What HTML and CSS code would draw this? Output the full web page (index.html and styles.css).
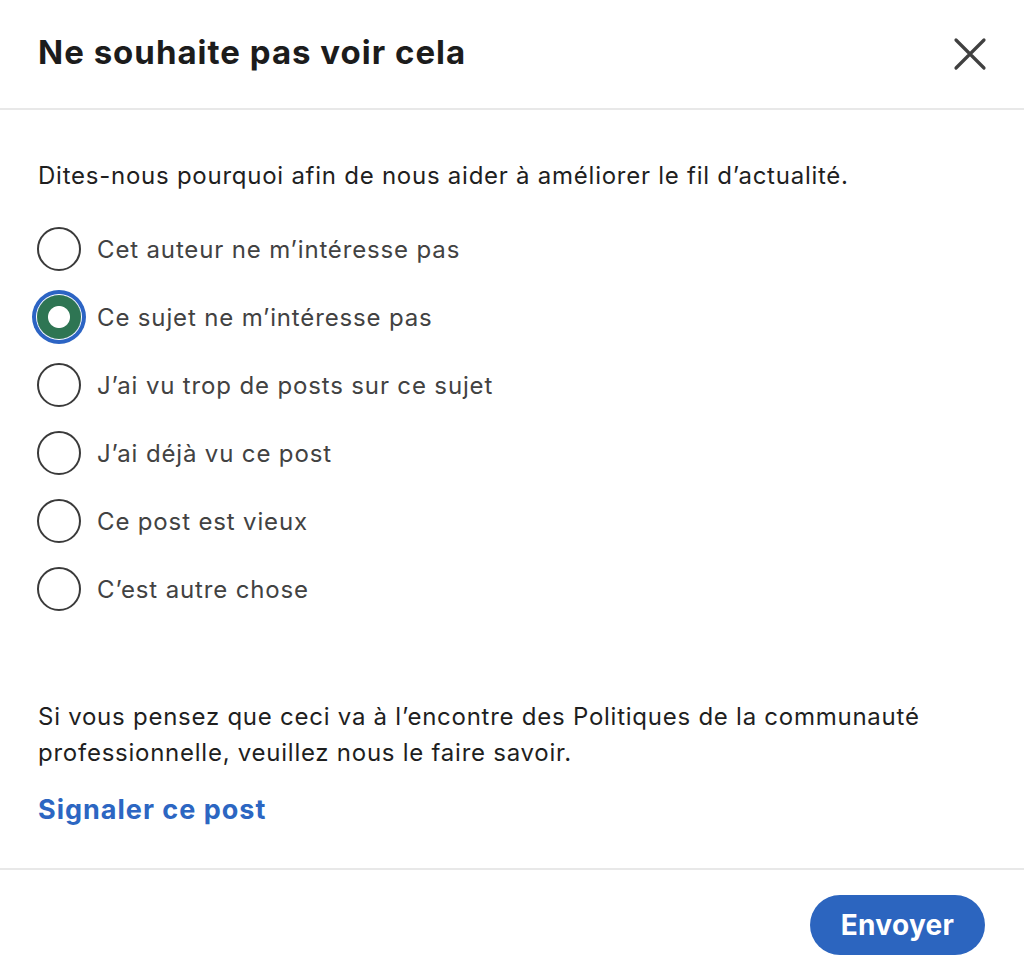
FILE: index.html
```html
<!DOCTYPE html>
<html lang="fr">
<head>
<meta charset="utf-8">
<link rel="stylesheet" href="styles.css">
</head>
<body>
<div class="modal">
  <header class="modal-header">
    <h1 class="title">Ne souhaite pas voir cela</h1>
    <button class="close" aria-label="Fermer">
      <svg width="34" height="34" viewBox="0 0 34 34"><path d="M3 3 L31 31 M31 3 L3 31" stroke="#404040" stroke-width="3.2" stroke-linecap="round" fill="none"/></svg>
    </button>
  </header>
  <section class="modal-body">
    <p class="intro">Dites-nous pourquoi afin de nous aider à améliorer le fil d’actualité.</p>
    <ul class="options">
      <li class="option"><span class="radio"></span><span class="label">Cet auteur ne m’intéresse pas</span></li>
      <li class="option"><span class="radio checked"></span><span class="label">Ce sujet ne m’intéresse pas</span></li>
      <li class="option"><span class="radio"></span><span class="label">J’ai vu trop de posts sur ce sujet</span></li>
      <li class="option"><span class="radio"></span><span class="label">J’ai déjà vu ce post</span></li>
      <li class="option"><span class="radio"></span><span class="label">Ce post est vieux</span></li>
      <li class="option"><span class="radio"></span><span class="label">C’est autre chose</span></li>
    </ul>
    <p class="policy">Si vous pensez que ceci va à l’encontre des Politiques de la communauté professionnelle, veuillez nous le faire savoir.</p>
    <a class="report" href="#">Signaler ce post</a>
  </section>
  <footer class="modal-footer">
    <button class="send">Envoyer</button>
  </footer>
</div>
</body>
</html>
```

FILE: styles.css
```css
* { box-sizing: border-box; }
html, body { margin: 0; padding: 0; background: #fff; }
body { font-family: Inter, "Liberation Sans", Arial, sans-serif; color: #1f1f1f; }
.modal { width: 1024px; height: 975px; display: flex; flex-direction: column; }
.modal-header {
  height: 110px;
  display: flex; align-items: center; justify-content: space-between;
  padding: 0 37px 0 38px;
  border-bottom: 2px solid #e8e8e8;
}
.title { margin: 0 0 4px 0; font-size: 33px; font-weight: 700; color: #1c1c1c; letter-spacing: 1px; }
.close { border: 0; background: none; padding: 0; width: 34px; height: 34px; display: flex; }
.modal-body { padding: 51px 38px 0 38px; height: 760px; border-bottom: 2px solid #e8e8e8; }
.intro { margin: 0; font-size: 24px; line-height: 30px; letter-spacing: 0.75px; color: #1f1f1f; }
.options { list-style: none; margin: 36px 0 0 -1px; padding: 0; display: flex; flex-direction: column; gap: 24px; }
.option { display: flex; align-items: center; gap: 16px; height: 44px; }
.radio { width: 44px; height: 44px; border-radius: 50%; border: 2px solid #3a3a3a; flex: none; }
.radio.checked {
  border: 0;
  background: radial-gradient(circle, #fff 0 10.5px, #2e7553 11.5px);
  box-shadow: 0 0 0 1px #fff, 0 0 0 5px #2c64c4;
}
.label { font-size: 24px; letter-spacing: 0.85px; color: #424242; }
.policy { margin: 88px 0 0 0; font-size: 24px; line-height: 36px; letter-spacing: 0.75px; color: #1f1f1f; }
.report { display: inline-block; margin-top: 22px; font-size: 27px; font-weight: 700; letter-spacing: 1px; color: #2c66c2; text-decoration: none; }
.modal-footer { flex: 1; display: flex; justify-content: flex-end; align-items: flex-start; padding: 25px 39px 0 0; }
.send {
  width: 175px; height: 60px; border-radius: 30px; border: 0;
  background: #2c65bf; color: #fff;
  font-family: Inter, "Liberation Sans", Arial, sans-serif; font-size: 28px; font-weight: 700; letter-spacing: 0.3px;
}
```
